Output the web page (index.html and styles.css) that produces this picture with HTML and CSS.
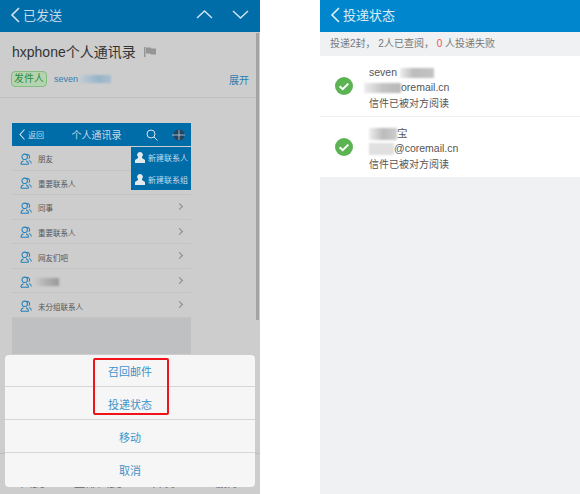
FILE: index.html
```html
<!DOCTYPE html>
<html lang="zh-CN">
<head>
    <meta charset="UTF-8">
    <title>投递状态</title>
    <link rel="stylesheet" href="styles.css">
</head>
<body>
<svg class="sprites" width="0" height="0">
    <symbol id="group" viewBox="0 0 14 14">
        <g fill="none" stroke="#2380ba" stroke-width="1.2">
            <circle cx="5.5" cy="4.5" r="3.2"/>
            <path d="M1 13c0-2.400 1.600-3.400 3-4M10 13c0-2.400-1.600-3.400-3-4M1 13h9"/>
            <path d="M8.200 1.500a3.100 3.100 0 0 1 2 5.400M10.500 8.600c1.400.6 2.700 1.600 2.700 3.600"/>
        </g>
    </symbol>
    <symbol id="check" viewBox="0 0 18 18">
        <circle cx="9" cy="9" r="9" fill="#5cb352"/>
        <path d="M4.600 9.200l3.100 3 5.600-5.600" fill="none" stroke="#fff" stroke-width="2"/>
    </symbol>
</svg>

<div class="page">
    <section class="mail">
        <header class="mail-bar">
            <svg class="back" width="10" height="16" viewBox="0 0 10 16"><path d="M9 1L2 8l7 7" fill="none" stroke="#d5e6f0" stroke-width="1.6"/></svg>
            <span class="mail-bar-title">已发送</span>
            <svg class="arrow" width="17" height="9" viewBox="0 0 17 9"><path d="M1 8l7.500-7L16 8" fill="none" stroke="#d5e6f0" stroke-width="1.4"/></svg>
            <svg class="arrow" width="17" height="9" viewBox="0 0 17 9"><path d="M1 1l7.500 7L16 1" fill="none" stroke="#d5e6f0" stroke-width="1.4"/></svg>
        </header>

        <div class="mail-head">
            <h1 class="subject">hxphone个人通讯录
                <svg class="flag" width="12" height="10" viewBox="0 0 12 10"><path d="M0 0h1.500v10H0zM2 0.500h4.500l1 1H12v6H7l-1-1H2z" fill="#959595"/></svg>
            </h1>
            <div class="sender">
                <span class="tag">发件人</span>
                <span class="sender-name">seven</span>
                <span class="smudge smudge-blue"></span>
                <span class="expand">展开</span>
            </div>
        </div>

        <div class="shot">
            <div class="shot-bar">
                <svg width="6" height="11" viewBox="0 0 6 11"><path d="M5.500 .5L1 5.500l4.500 5" fill="none" stroke="#d5e6f0" stroke-width="1.100"/></svg>
                <span class="shot-back">返回</span>
                <span class="shot-title">个人通讯录</span>
                <svg class="shot-search" width="12" height="12" viewBox="0 0 12 12"><g fill="none" stroke="#d5e6f0" stroke-width="1"><circle cx="5" cy="5" r="4"/><path d="M8 8l3.500 3.500"/></g></svg>
                <svg width="13" height="12" viewBox="0 0 13 12"><circle cx="7" cy="6" r="5.500" fill="#24445e"/><path d="M0 6h13M7 1v10" stroke="#d5e6f0" stroke-width=".7"/></svg>
            </div>
            <ul class="groups">
                <li><svg class="group-icon"><use href="#group"/></svg>朋友</li>
                <li><svg class="group-icon"><use href="#group"/></svg>重要联系人</li>
                <li><svg class="group-icon"><use href="#group"/></svg>同事<i class="chev"></i></li>
                <li><svg class="group-icon"><use href="#group"/></svg>重要联系人<i class="chev"></i></li>
                <li><svg class="group-icon"><use href="#group"/></svg>网友们吧<i class="chev"></i></li>
                <li><svg class="group-icon"><use href="#group"/></svg><span class="smudge smudge-grey"></span><i class="chev"></i></li>
                <li><svg class="group-icon"><use href="#group"/></svg>未分组联系人<i class="chev"></i></li>
            </ul>
            <div class="popup">
                <div class="popup-item"><svg width="10" height="11" viewBox="0 0 10 11"><path d="M5 0a2.800 2.800 0 0 1 2 4.800V6l3 2v3H0V8l3-2V4.800A2.800 2.800 0 0 1 5 0z" fill="#e4e9ec"/></svg>新建联系人</div>
                <div class="popup-item"><svg width="10" height="11" viewBox="0 0 10 11"><path d="M5 0a2.800 2.800 0 0 1 2 4.800V6l3 2v3H0V8l3-2V4.800A2.800 2.800 0 0 1 5 0z" fill="#e4e9ec"/></svg>新建联系组</div>
            </div>
        </div>

        <div class="mail-foot">
            <span>回复</span>
            <span>全部回复</span>
            <span>转发</span>
            <span>删除</span>
        </div>

        <div class="scroll-thumb"></div>

        <div class="sheet">
            <div class="sheet-item">召回邮件</div>
            <div class="sheet-item">投递状态</div>
            <div class="sheet-item">移动</div>
            <div class="sheet-item">取消</div>
        </div>
        <div class="marker"></div>
    </section>

    <section class="status">
        <header class="status-bar">
            <svg width="10" height="16" viewBox="0 0 10 16"><path d="M9 1L2 8l7 7" fill="none" stroke="#e3f1fa" stroke-width="1.6"/></svg>
            <span>投递状态</span>
        </header>
        <p class="summary">投递2封，&nbsp;2人已查阅，&nbsp;<b>0</b>&nbsp;人投递失败</p>
        <div class="receipt">
            <svg class="check"><use href="#check"/></svg>
            <div class="receipt-text">
                <div>seven <span class="smudge smudge-wide"></span></div>
                <div><span class="smudge smudge-mail"></span>oremail.cn</div>
                <div class="receipt-note">信件已被对方阅读</div>
            </div>
        </div>
        <div class="receipt">
            <svg class="check"><use href="#check"/></svg>
            <div class="receipt-text">
                <div><span class="smudge smudge-name"></span>宝</div>
                <div><span class="smudge smudge-short"></span>@coremail.cn</div>
                <div class="receipt-note">信件已被对方阅读</div>
            </div>
        </div>
    </section>
</div>
</body>
</html>
```

FILE: styles.css
```css
* {
    box-sizing: border-box;
}
html, body {
    margin: 0;
    padding: 0;
    background: #fff;
}
body {
    font-family: "Liberation Sans", "Noto Sans CJK SC", sans-serif;
    overflow: hidden;
}
.sprites {
    position: absolute;
}
.page {
    display: flex;
    justify-content: space-between;
    width: 580px;
    height: 494px;
}

/* left phone */
.mail {
    position: relative;
    width: 260px;
    height: 494px;
    background: #cdcdcd;
    overflow: hidden;
}
.mail-bar {
    display: flex;
    align-items: center;
    height: 32px;
    padding: 0 11px 3px 10px;
    background: #006ca8;
    color: #c6dbe8;
    font-size: 13px;
}
.mail-bar-title {
    flex: 1;
    margin-left: 3px;
}
.arrow {
    margin-left: 19px;
}
.mail-head {
    height: 66px;
    margin-right: 4px;
    padding: 10px 7px 0 12px;
    border-bottom: 1px solid #bfbfbf;
}
.subject {
    margin: 0;
    font-size: 14px;
    font-weight: normal;
    line-height: 20px;
    color: #333;
}
.flag {
    margin-left: 4px;
}
.sender {
    display: flex;
    align-items: center;
    margin-top: 9px;
    margin-left: -1px;
    font-size: 9px;
    color: #2f7db0;
}
.tag {
    width: 36px;
    height: 16px;
    margin-right: 7px;
    border: 1px solid #83bd80;
    border-radius: 4px;
    background: #b4d4b1;
    color: #2f8a3a;
    font-size: 10px;
    line-height: 14px;
    text-align: center;
}
.sender-name {
    margin-right: 2px;
}
.expand {
    margin-left: auto;
    font-size: 10px;
}
.smudge {
    display: inline-block;
    vertical-align: middle;
    filter: blur(1px);
}
.smudge-blue {
    width: 31px;
    height: 8px;
    background: linear-gradient(90deg, #c0ccd4, #96b4c8 60%, #a8c0d0);
}
.smudge-grey {
    width: 26px;
    height: 8px;
    margin-left: -5px;
    background: linear-gradient(90deg, #cfcfcf, #b0b0b0 50%, #9a9a9a);
}

/* screenshot inside the mail */
.shot {
    position: relative;
    width: 179px;
    height: 231px;
    margin: 25px 0 0 12px;
    background: #bfc0c2;
}
.shot-bar {
    display: flex;
    align-items: center;
    height: 23px;
    padding: 0 6px 0 7px;
    background: #006ca8;
    color: #c6dbe8;
    font-size: 8px;
}
.shot-back {
    margin-left: 3px;
}
.shot-title {
    flex: 1;
    padding-left: 3px;
    font-size: 10px;
    text-align: center;
}
.shot-search {
    margin-right: 14px;
}
.groups {
    margin: 0;
    padding: 0;
    list-style: none;
}
.groups li {
    position: relative;
    display: flex;
    align-items: center;
    height: 24.57px;
    padding: 2px 0 0 8px;
    border-bottom: 1px solid #c3c3c3;
    background: #cdcdcd;
    color: #555;
    font-size: 7.500px;
}
.group-icon {
    width: 12px;
    height: 12px;
    margin-right: 6px;
}
.chev {
    position: absolute;
    right: 9px;
    top: 9px;
    width: 5px;
    height: 5px;
    border-top: 1px solid #8a8a8a;
    border-right: 1px solid #8a8a8a;
    transform: rotate(45deg);
}
.popup {
    position: absolute;
    top: 24px;
    right: 0;
    width: 60px;
    height: 43px;
    background: #006ca8;
    color: #c6dbe8;
    font-size: 8px;
}
.popup-item {
    display: flex;
    align-items: center;
    gap: 3px;
    height: 21.500px;
    padding-left: 4px;
}
.mail-foot {
    display: grid;
    grid-template-columns: repeat(4, 65px);
    height: 42px;
    margin-top: 99px;
    padding-top: 22px;
    border-top: 1px solid #bdbdbd;
    color: #666;
    font-size: 12px;
    line-height: 14px;
    text-align: center;
}
.scroll-thumb {
    position: absolute;
    top: 33px;
    left: 256px;
    width: 3px;
    height: 287px;
    background: #a4a4a4;
}

/* action sheet over the mail */
.sheet {
    position: absolute;
    left: 5px;
    top: 355px;
    width: 250px;
    height: 132px;
    border-radius: 4px;
    background: #f6f6f6;
    overflow: hidden;
}
.sheet-item {
    height: 33px;
    border-bottom: 1px solid #d6d6d6;
    color: #3d94ca;
    font-size: 11px;
    line-height: 37px;
    text-align: center;
}
.sheet-item:first-child {
    margin-top: -1px;
}
.sheet-item:last-child {
    border-bottom: 0;
}
.marker {
    position: absolute;
    left: 93px;
    top: 358px;
    width: 76px;
    height: 57px;
    border: 2px solid #f0141a;
    border-radius: 2px;
}

/* right phone */
.status {
    width: 260px;
    height: 494px;
    background: #eff1f3;
}
.status-bar {
    display: flex;
    align-items: center;
    gap: 3px;
    height: 32px;
    padding: 0 0 3px 10px;
    background: #0086cc;
    color: #d9edf8;
    font-size: 13px;
}
.summary {
    height: 24px;
    margin: 0;
    padding-left: 10px;
    color: #777;
    font-size: 10px;
    line-height: 24px;
}
.summary b {
    color: #f0524f;
    font-weight: normal;
}
.receipt {
    display: flex;
    align-items: center;
    height: 61px;
    padding-left: 15px;
    background: #fff;
    border-bottom: 1px solid #f1f1f1;
}
.check {
    width: 18px;
    height: 18px;
    margin-right: 16px;
}
.receipt-text {
    padding-top: 4px;
    color: #555;
    font-size: 10.500px;
    line-height: 15.500px;
}
.receipt-note {
    font-size: 10px;
}
.smudge-wide {
    width: 34px;
    height: 10px;
    background: linear-gradient(90deg, #eee, #bcbcbc 40%, #c4c4c4);
}
.smudge-mail {
    width: 37px;
    height: 10px;
    margin-left: -5px;
    background: linear-gradient(90deg, #eee, #c4c4c4 50%, #b8b8b8);
}
.smudge-name {
    width: 28px;
    height: 12px;
    background: linear-gradient(90deg, #eee, #bbb 50%, #ccc);
}
.smudge-short {
    width: 25px;
    height: 12px;
    background: #e0e0e0;
}
```
